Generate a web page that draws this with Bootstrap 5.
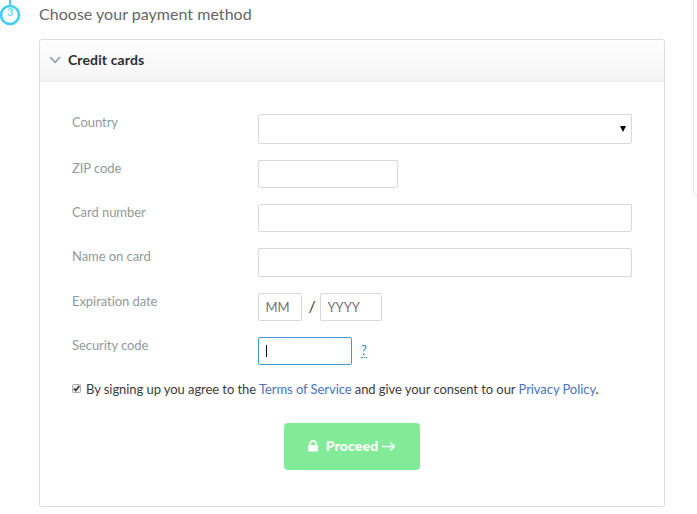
<!DOCTYPE html>
<html lang="en">
<head>
<meta charset="utf-8">
<meta name="viewport" content="width=device-width, initial-scale=1">
<title>Payment method</title>
<link href="https://cdn.jsdelivr.net/npm/bootstrap@5.3.0/dist/css/bootstrap.min.css" rel="stylesheet">
<style>
body{font-family:Lato,"Liberation Sans",sans-serif;font-size:13px;line-height:18px;color:#3c3c3c;background:#fff;height:514px;overflow:hidden}
.step-head{height:39px}
.step-mark{width:39px;height:39px;flex:none}
.step-title{font-size:16px;line-height:20px;padding-top:4px;color:#666;font-weight:400;letter-spacing:.03px}
.pay-card{width:626px;height:468px;margin-left:39px;border-color:#dadee1;border-radius:3px}
.pay-head{height:42px;background:linear-gradient(#fefefe,#f5f5f5);border-bottom:1px solid #e7e9ea;border-radius:2px 2px 0 0;padding:0 0 1px 10px;font-size:14px;font-weight:700;color:#2d2d32;letter-spacing:.12px}
.pay-body{padding:32px 32px 0}
.field-row{height:44px}
.field-row.first{height:46px}
.field-row.tall{height:45px}
.field-row label{width:186px;color:#8f9a9b;flex:none;margin-top:-1px;letter-spacing:-.06px}
.field-row .form-control,.field-row .form-select{height:28px;padding:0 7px;border:1px solid #d8dadb;border-radius:2px;font-size:13px;line-height:26px;color:#333;box-shadow:inset 0 1px 3px rgba(0,0,0,.025)}
.field-row .name-box{height:29px}
.field-row .w-month,.field-row .w-year{padding-bottom:1px;padding-left:6.5px}
.field-row .form-select{height:30px;background-image:url("data:image/svg+xml,%3Csvg xmlns='http://www.w3.org/2000/svg' viewBox='0 0 6 6'%3E%3Cpath d='M0 0h6L3 6z'/%3E%3C/svg%3E");background-size:6px 6px;background-position:right 5px center}
.field-row .form-control::placeholder{color:#757575;opacity:1}
.w-zip{width:140px}.w-month{width:44px}.w-year{width:62px}.w-code{width:94px}
.field-row .w-code{border-color:#3b9fd3;box-shadow:none}
.caret{position:absolute;left:8px;top:8px;width:1px;height:12px;background:#000}
.slash{width:18px;padding-left:2px;font-size:16px;line-height:26px}
.hint{margin-left:9px;margin-top:4px;height:17px;color:#2d8cc8;border-bottom:1px dotted #2d8cc8;text-decoration:none}
.terms{height:18px;white-space:nowrap;letter-spacing:-.065px;margin-top:-1px}
.terms a{color:#4a72c4;text-decoration:none}
.tick{width:9px;height:9px;margin:-2px 5px 0 0;flex:none}
.btn-proceed{width:136px;height:47px;margin:25px 0 0 212px;background:#82eb98;border:0;border-radius:4px;color:#fff;font-size:14px;font-weight:900}
.btn-proceed:hover{background:#76df8c;color:#fff}
.btn-content{margin-top:-2px}
.btn-label{margin:-1px 4px 0 8px;letter-spacing:.15px}
.side-panel{position:absolute;left:693px;top:-4px;width:4px;height:200px;border:1px solid #e6e8ea;border-right:0;border-radius:3px 0 0 3px}
</style>
</head>
<body class="position-relative">
<header class="step-head d-flex">
  <svg class="step-mark" viewBox="0 0 39 39"><path d="M10 0v6" stroke="#40cef8" stroke-width="2"/><circle cx="10" cy="15" r="9" fill="#fff" stroke="#40cef8" stroke-width="2.6"/><text x="10.3" y="16.3" text-anchor="middle" font-size="11" font-weight="700" fill="#6bd8f8">3</text></svg>
  <h1 class="step-title m-0">Choose your payment method</h1>
</header>
<main class="card pay-card">
  <div class="pay-head d-flex align-items-center">
    <svg width="18" height="12" viewBox="0 0 18 12" fill="none"><path d="M.2 3.2 5.1 8.3 10 3.2" stroke="#9ba2a9" stroke-width="1.7"/></svg>
    <span>Credit cards</span>
  </div>
  <form class="pay-body">
    <div class="field-row first d-flex align-items-start"><label for="country">Country</label><select id="country" class="form-select flex-fill"><option></option></select></div>
    <div class="field-row d-flex align-items-start"><label for="zip">ZIP code</label><input id="zip" class="form-control w-zip"></div>
    <div class="field-row d-flex align-items-start"><label for="num">Card number</label><input id="num" class="form-control flex-fill"></div>
    <div class="field-row tall d-flex align-items-start"><label for="name">Name on card</label><input id="name" class="form-control name-box flex-fill"></div>
    <div class="field-row d-flex align-items-start"><label for="mm">Expiration date</label><input id="mm" class="form-control w-month" placeholder="MM"><span class="slash text-center">/</span><input class="form-control w-year" placeholder="YYYY" aria-label="Year"></div>
    <div class="field-row d-flex align-items-start"><label for="code">Security code</label><span class="position-relative"><input id="code" class="form-control w-code"><span class="caret"></span></span><a class="hint" href="#">?</a></div>
    <div class="terms d-flex align-items-center">
      <svg class="tick" viewBox="0 0 9 9"><rect x=".5" y=".5" width="8" height="8" rx="1" fill="#e8e8e8" stroke="#aaa"/><path d="M2 4.6 3.8 6.5 7.3 2" fill="none" stroke="#333" stroke-width="1.6"/></svg>
      <span>By signing up you agree to the <a href="#">Terms of Service</a> and give your consent to our <a href="#">Privacy Policy</a>.</span>
    </div>
    <button type="button" class="btn btn-proceed d-flex align-items-center justify-content-center p-0">
      <span class="btn-content d-flex align-items-center">
        <svg width="10" height="12" viewBox="0 0 10 12"><path d="M2.2 6V3.7a2.8 2.8 0 0 1 5.6 0V6" fill="none" stroke="#fff" stroke-width="1.6"/><rect y="5" width="10" height="6.5" rx=".7" fill="#fff"/></svg>
        <span class="btn-label">Proceed</span>
        <svg width="14" height="12" viewBox="0 0 14 12" fill="none" stroke="#fff" stroke-width="1.7"><path d="M0 6.5h12M8.2 2.5l4 4-4 4"/></svg>
      </span>
    </button>
  </form>
</main>
<aside class="side-panel"></aside>
<script src="https://cdn.jsdelivr.net/npm/bootstrap@5.3.0/dist/js/bootstrap.bundle.min.js"></script>
</body>
</html>
